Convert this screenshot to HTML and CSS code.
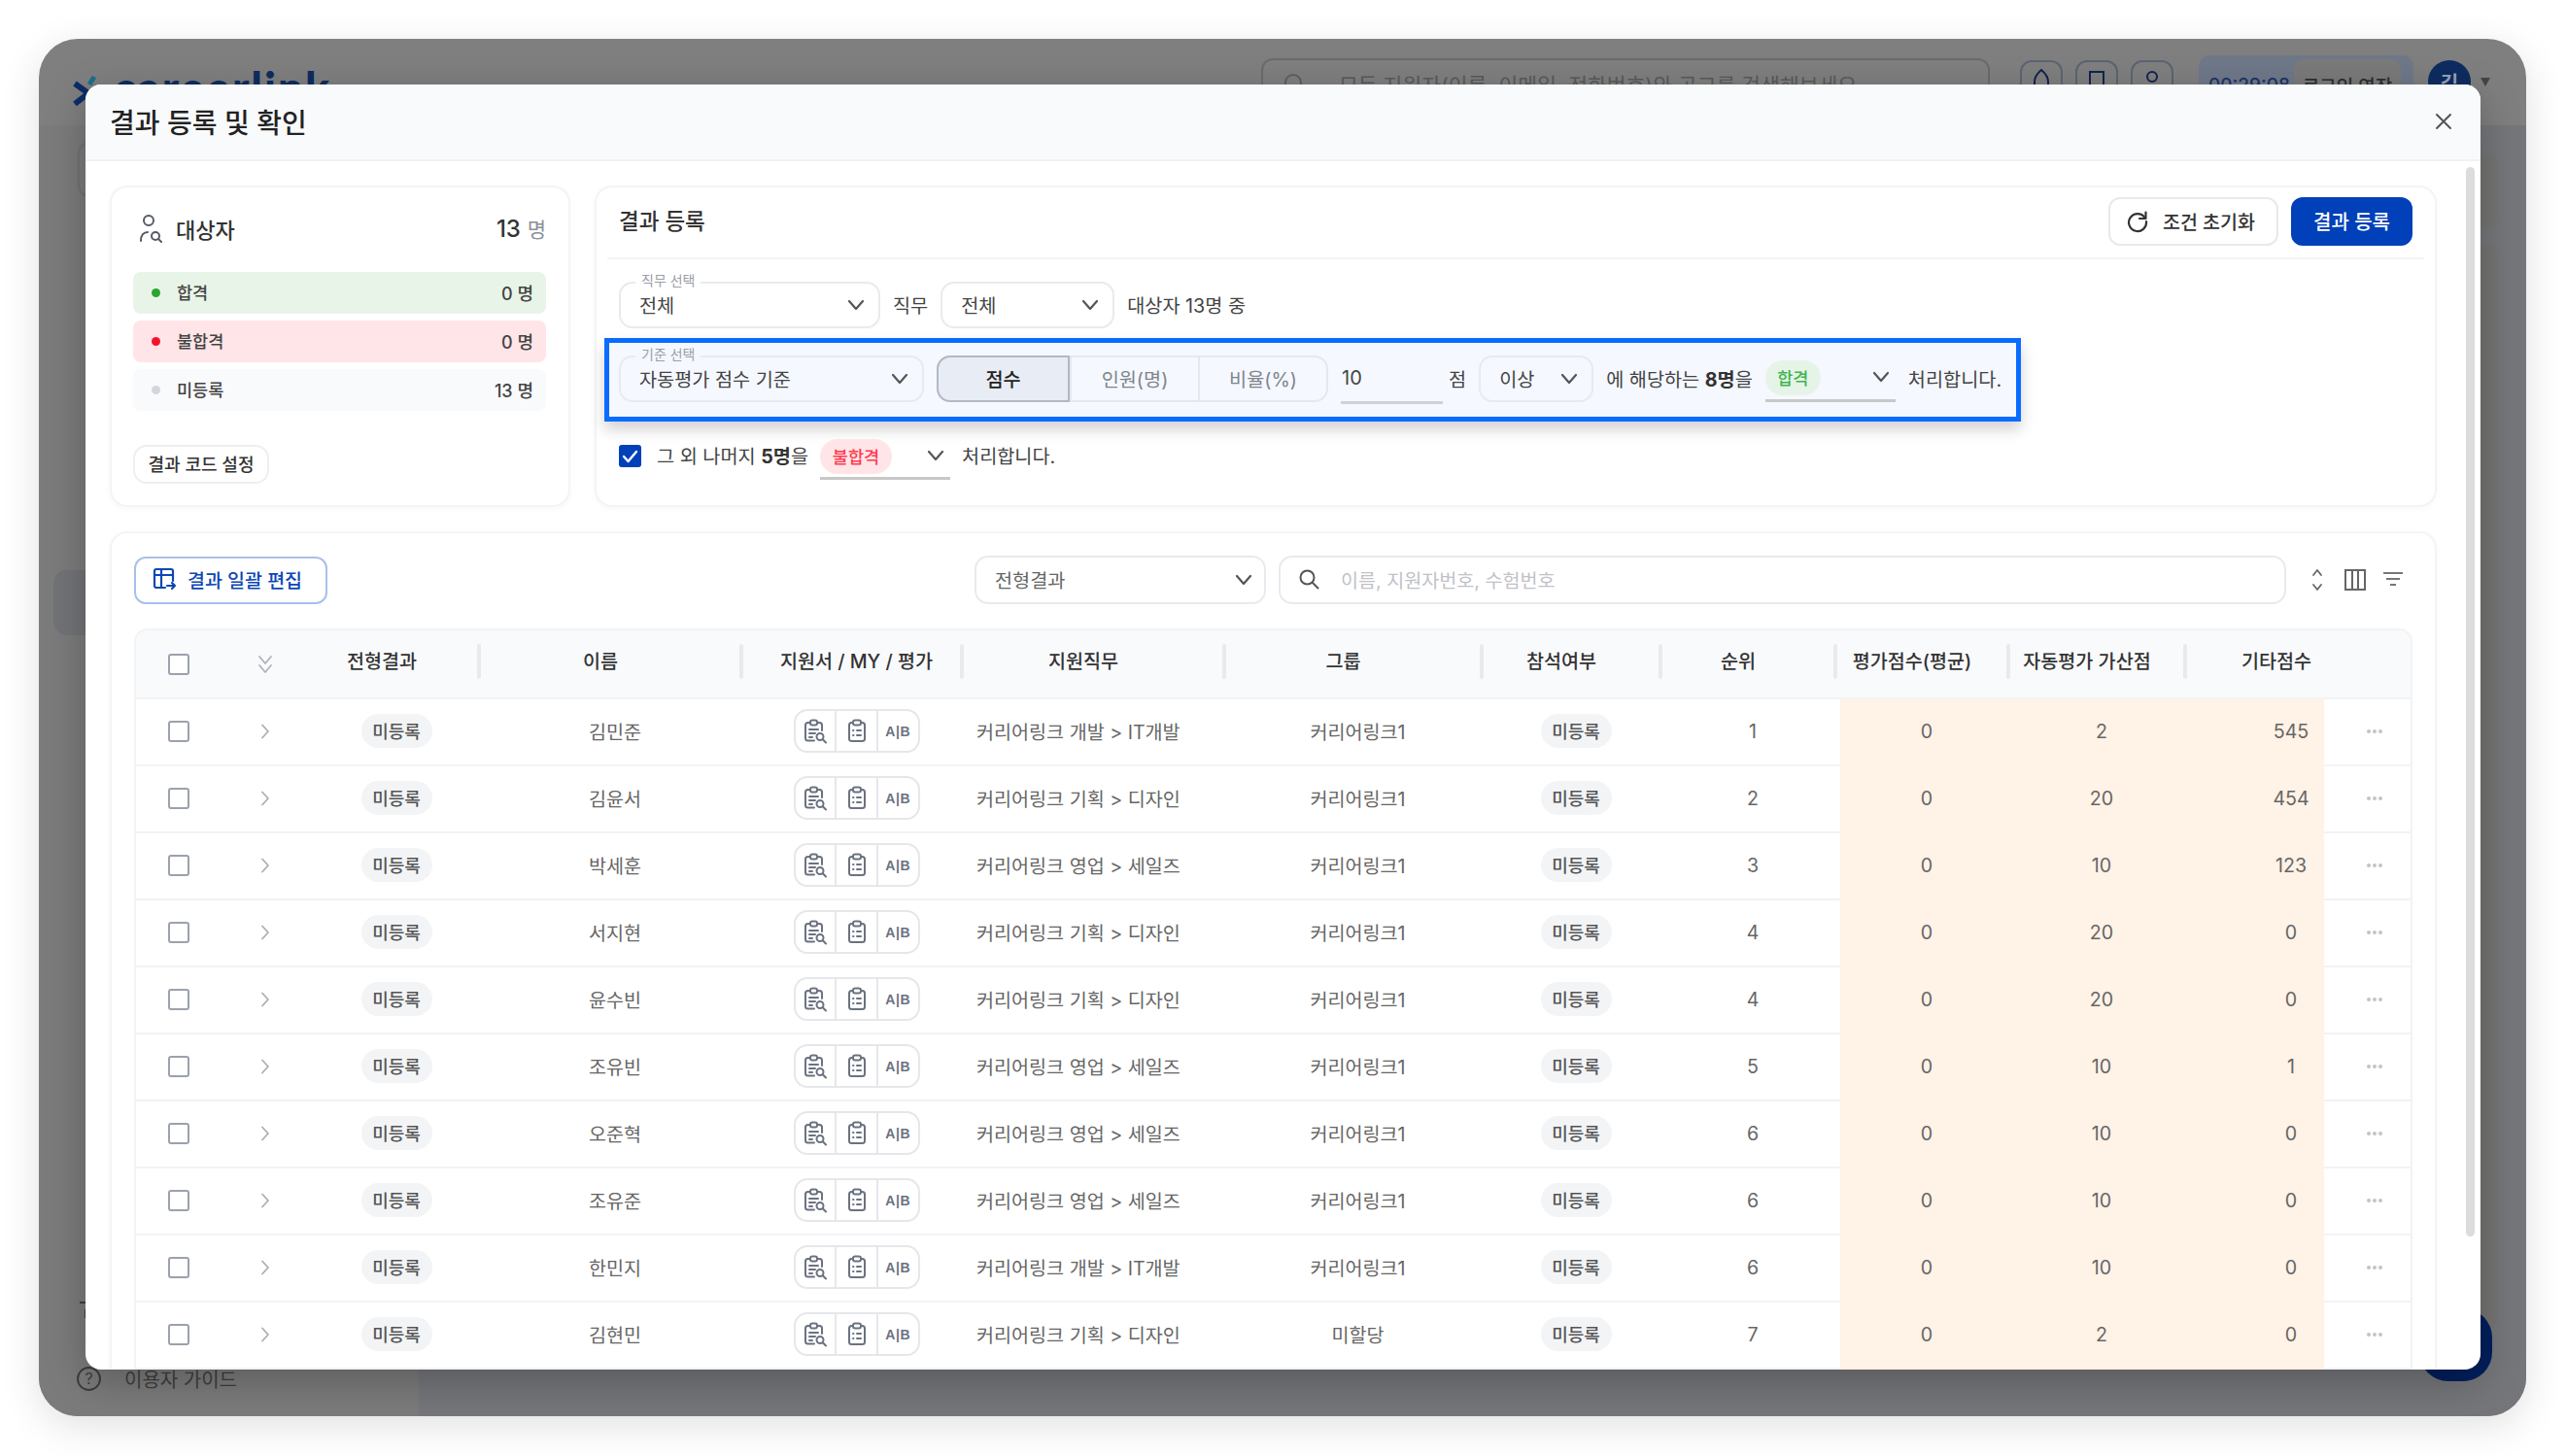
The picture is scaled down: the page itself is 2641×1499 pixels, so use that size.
FILE: index.html
```html
<!DOCTYPE html>
<html lang="ko">
<head>
<meta charset="utf-8">
<title>결과 등록 및 확인</title>
<link rel="stylesheet" href="styles.css">
</head>
<body>
<svg class="defs" width="0" height="0" aria-hidden="true">
  <symbol id="chev" viewBox="0 0 18 12"><path d="M2 2l7 8 7-8" fill="none" stroke="currentColor" stroke-width="2.2" stroke-linecap="round" stroke-linejoin="round"/></symbol>
  <symbol id="right" viewBox="0 0 10 16"><path d="M2 1.5L8 8l-6 6.5" fill="none" stroke="currentColor" stroke-width="1.8" stroke-linecap="round" stroke-linejoin="round"/></symbol>
  <symbol id="clipsearch" viewBox="0 0 24 26"><g fill="none" stroke="currentColor" stroke-width="2" stroke-linecap="round" stroke-linejoin="round"><path d="M7 4H4.5A2.5 2.5 0 0 0 2 6.500V20a2.500 2.500 0 0 0 2.500 2.500H11"/><path d="M14 4h2.500A2.500 2.500 0 0 1 19 6.500V12"/><rect x="7" y="1.500" width="7" height="5" rx="2"/><path d="M6 11h9M6 15h6M6 19h3"/><circle cx="17" cy="18.500" r="3.500"/><path d="M19.800 21.300L23 24.500"/></g></symbol>
  <symbol id="cliplist" viewBox="0 0 20 25"><g fill="none" stroke="currentColor" stroke-width="2" stroke-linecap="round" stroke-linejoin="round"><path d="M6 4H4.500A2.500 2.500 0 0 0 2 6.500v14A2.500 2.500 0 0 0 4.500 23h11a2.500 2.500 0 0 0 2.500-2.500v-14A2.500 2.500 0 0 0 15.500 4H14"/><rect x="6" y="1.500" width="8" height="5" rx="2"/><path d="M6 12h.5M6 17h.5M10 12h4M10 17h4"/></g></symbol>
</svg>

<div class="frame">
  <header class="topbar">
    <div class="brand">
      <svg class="brand-mark" viewBox="0 0 24 34" width="24" height="34" aria-hidden="true"><path d="M2 9l14 10L2 30" fill="none" stroke="#0c2d68" stroke-width="6"/><path d="M17 10l5-8" stroke="#1e6f8c" stroke-width="5"/></svg>
      <span class="brand-name">careerlink</span>
    </div>
    <div class="top-tools">
      <div class="top-search">
        <svg width="24" height="24" viewBox="0 0 24 24" aria-hidden="true"><circle cx="11" cy="11" r="8" fill="none" stroke="#5f5f5f" stroke-width="2"/></svg>
        <span>모든 지원자(이름, 이메일, 전화번호)와 공고를 검색해보세요</span>
      </div>
      <div class="top-icons">
        <span class="top-icon"><svg width="18" height="30" viewBox="0 0 18 30" aria-hidden="true"><path d="M2 28V14C2 8 9 2 9 2s7 6 7 12v14" fill="none" stroke="#11244f" stroke-width="2"/></svg></span>
        <span class="top-icon"><svg width="18" height="30" viewBox="0 0 18 30" aria-hidden="true"><path d="M2 28V4h14v24" fill="none" stroke="#11244f" stroke-width="2"/></svg></span>
        <span class="top-icon"><svg width="18" height="30" viewBox="0 0 18 30" aria-hidden="true"><circle cx="9" cy="9" r="5" fill="none" stroke="#11244f" stroke-width="2"/><path d="M2 24h14" stroke="#11244f" stroke-width="2"/></svg></span>
      </div>
      <div class="timer">
        <span class="timer-time">00:29:08</span>
        <span class="timer-btn">로그인 연장</span>
      </div>
      <span class="avatar">김</span>
      <span class="caret"></span>
    </div>
  </header>

  <div class="back">
    <aside class="sidebar">
      <div class="side-box"></div>
      <div class="side-block"></div>
      <svg class="side-icon" width="24" height="20" viewBox="0 0 24 20" aria-hidden="true"><path d="M2 2h20v8H8v8" fill="none" stroke="#3f3f3f" stroke-width="2"/></svg>
      <div class="guide">
        <span class="guide-icon">?</span>
        <span>이용자 가이드</span>
      </div>
    </aside>
    <main class="back-main">
      <div class="back-card short"></div>
      <div class="back-card tall"></div>
    </main>
  </div>

  <div class="fab"></div>

  <section class="modal">
    <div class="modal-head">
      <h1 class="modal-title">결과 등록 및 확인</h1>
      <svg class="modal-close" width="18" height="18" viewBox="0 0 18 18" aria-hidden="true"><path d="M2 2l14 14M16 2L2 16" fill="none" stroke="#555" stroke-width="2" stroke-linecap="round"/></svg>
    </div>
    <div class="scroll-thumb"></div>
    <div class="modal-body">
      <div class="top-cards">
        <div class="card summary">
          <div class="sum-head">
            <svg width="26" height="30" viewBox="0 0 26 30" aria-hidden="true"><g fill="none" stroke="#555b66" stroke-width="2" stroke-linecap="round"><circle cx="10" cy="7" r="5"/><path d="M2 28c0-6 3-9 7-9"/><circle cx="17" cy="23" r="4"/><path d="M20 26l3 3"/></g></svg>
            <span class="sum-title">대상자</span>
            <span class="sum-total"><b>13</b> <i>명</i></span>
          </div>
          <div class="sum-row pass"><span class="dot"></span><span class="sum-label">합격</span><span class="sum-num">0 명</span></div>
          <div class="sum-row fail"><span class="dot"></span><span class="sum-label">불합격</span><span class="sum-num">0 명</span></div>
          <div class="sum-row none"><span class="dot"></span><span class="sum-label">미등록</span><span class="sum-num">13 명</span></div>
          <button class="code-btn" type="button">결과 코드 설정</button>
        </div>

        <div class="card register">
          <div class="reg-head">
            <h2 class="reg-title">결과 등록</h2>
            <button class="reset-btn" type="button">
              <svg width="24" height="24" viewBox="0 0 24 24" aria-hidden="true"><path d="M19.500 8A9 9 0 1 0 21 12" fill="none" stroke="#333" stroke-width="2.200" stroke-linecap="round"/><path d="M20.500 2.500V9H14" fill="none" stroke="#333" stroke-width="2.200" stroke-linejoin="round" stroke-linecap="round"/></svg>
              조건 초기화
            </button>
            <button class="submit-btn" type="button">결과 등록</button>
          </div>

          <div class="cond-row">
            <div class="sel w269"><span class="sel-label">직무 선택</span><span>전체</span><svg class="chev"><use href="#chev"/></svg></div>
            <span class="txt">직무</span>
            <div class="sel w179"><span>전체</span><svg class="chev"><use href="#chev"/></svg></div>
            <span class="txt">대상자 13명 중</span>
          </div>

          <div class="cond-row hl">
            <div class="sel w314"><span class="sel-label">기준 선택</span><span>자동평가 점수 기준</span><svg class="chev"><use href="#chev"/></svg></div>
            <div class="seg">
              <span class="seg-item active">점수</span>
              <span class="seg-item">인원(명)</span>
              <span class="seg-item">비율(%)</span>
            </div>
            <span class="num-input">10</span>
            <span class="txt">점</span>
            <div class="sel w118"><span>이상</span><svg class="chev"><use href="#chev"/></svg></div>
            <span class="txt">에 해당하는 <b>8명</b>을</span>
            <div class="status"><span class="pill-pass">합격</span><svg class="chev"><use href="#chev"/></svg></div>
            <span class="txt">처리합니다.</span>
          </div>

          <div class="cond-row rest">
            <span class="check-on"><svg width="17" height="14" viewBox="0 0 17 14" aria-hidden="true"><path d="M2 7l4.500 5L15 2" fill="none" stroke="#fff" stroke-width="2.400" stroke-linecap="round" stroke-linejoin="round"/></svg></span>
            <span class="txt">그 외 나머지 <b>5명</b>을</span>
            <div class="status"><span class="pill-fail">불합격</span><svg class="chev"><use href="#chev"/></svg></div>
            <span class="txt">처리합니다.</span>
          </div>
        </div>
      </div>

      <div class="card list">
        <div class="toolbar">
          <button class="bulk-btn" type="button">
            <svg width="25" height="24" viewBox="0 0 25 24" aria-hidden="true"><g fill="none" stroke="#0d47b5" stroke-width="2.200" stroke-linejoin="round" stroke-linecap="round"><path d="M13 21H4a2 2 0 0 1-2-2V4a2 2 0 0 1 2-2h15a2 2 0 0 1 2 2v10"/><path d="M2 8h19M9 2v19"/><path d="M15 19h8M20 16l3 3-3 3"/></g></svg>
            결과 일괄 편집
          </button>
          <div class="sel w300 plain"><span>전형결과</span><svg class="chev"><use href="#chev"/></svg></div>
          <div class="search">
            <svg width="22" height="22" viewBox="0 0 22 22" aria-hidden="true"><g fill="none" stroke="#555" stroke-width="2" stroke-linecap="round"><circle cx="9.500" cy="9.500" r="7"/><path d="M15 15l5.500 5.500"/></g></svg>
            <span>이름, 지원자번호, 수험번호</span>
          </div>
          <svg class="tool-a" width="12" height="24" viewBox="0 0 12 24" aria-hidden="true"><path d="M2 7l4-5 4 5M2 17l4 5 4-5" fill="none" stroke="#666" stroke-width="1.800" stroke-linecap="round" stroke-linejoin="round"/></svg>
          <svg class="tool-b" width="24" height="24" viewBox="0 0 24 24" aria-hidden="true"><path d="M2 2h20v20H2zM9 2v20M15 2v20" fill="none" stroke="#666" stroke-width="2"/></svg>
          <svg class="tool-c" width="22" height="18" viewBox="0 0 22 18" aria-hidden="true"><path d="M1 2h20M4 8h14M8 14h6" fill="none" stroke="#777" stroke-width="2"/></svg>
        </div>

        <div class="table">
          <div class="tr th">
            <div class="td"><span class="box"></span></div>
            <div class="td"><svg width="16" height="22" viewBox="0 0 16 22" aria-hidden="true"><path d="M2 3l6 7 6-7M2 12l6 7 6-7" fill="none" stroke="#aeb2b9" stroke-width="1.800" stroke-linecap="round" stroke-linejoin="round"/></svg></div>
            <div class="td split">전형결과</div>
            <div class="td split">이름</div>
            <div class="td split nopad">지원서 / MY / 평가</div>
            <div class="td split">지원직무</div>
            <div class="td split">그룹</div>
            <div class="td split">참석여부</div>
            <div class="td split">순위</div>
            <div class="td split">평가점수(평균)</div>
            <div class="td split">자동평가 가산점</div>
            <div class="td last">기타점수</div>
            <div class="td"></div>
          </div>

          <div class="tr"><div class="td"><span class="box"></span></div><div class="td"><svg class="arrow"><use href="#right"/></svg></div><div class="td"><span class="pill">미등록</span></div><div class="td">김민준</div><div class="td"><div class="docs"><span><svg class="ic1"><use href="#clipsearch"/></svg></span><span><svg class="ic2"><use href="#cliplist"/></svg></span><span class="ab">A|B</span></div></div><div class="td job">커리어링크 개발 &gt; IT개발</div><div class="td">커리어링크1</div><div class="td"><span class="pill">미등록</span></div><div class="td">1</div><div class="td hot">0</div><div class="td hot">2</div><div class="td hot last">545</div><div class="td more"><i></i><i></i><i></i></div></div>

          <div class="tr"><div class="td"><span class="box"></span></div><div class="td"><svg class="arrow"><use href="#right"/></svg></div><div class="td"><span class="pill">미등록</span></div><div class="td">김윤서</div><div class="td"><div class="docs"><span><svg class="ic1"><use href="#clipsearch"/></svg></span><span><svg class="ic2"><use href="#cliplist"/></svg></span><span class="ab">A|B</span></div></div><div class="td job">커리어링크 기획 &gt; 디자인</div><div class="td">커리어링크1</div><div class="td"><span class="pill">미등록</span></div><div class="td">2</div><div class="td hot">0</div><div class="td hot">20</div><div class="td hot last">454</div><div class="td more"><i></i><i></i><i></i></div></div>

          <div class="tr"><div class="td"><span class="box"></span></div><div class="td"><svg class="arrow"><use href="#right"/></svg></div><div class="td"><span class="pill">미등록</span></div><div class="td">박세훈</div><div class="td"><div class="docs"><span><svg class="ic1"><use href="#clipsearch"/></svg></span><span><svg class="ic2"><use href="#cliplist"/></svg></span><span class="ab">A|B</span></div></div><div class="td job">커리어링크 영업 &gt; 세일즈</div><div class="td">커리어링크1</div><div class="td"><span class="pill">미등록</span></div><div class="td">3</div><div class="td hot">0</div><div class="td hot">10</div><div class="td hot last">123</div><div class="td more"><i></i><i></i><i></i></div></div>

          <div class="tr"><div class="td"><span class="box"></span></div><div class="td"><svg class="arrow"><use href="#right"/></svg></div><div class="td"><span class="pill">미등록</span></div><div class="td">서지현</div><div class="td"><div class="docs"><span><svg class="ic1"><use href="#clipsearch"/></svg></span><span><svg class="ic2"><use href="#cliplist"/></svg></span><span class="ab">A|B</span></div></div><div class="td job">커리어링크 기획 &gt; 디자인</div><div class="td">커리어링크1</div><div class="td"><span class="pill">미등록</span></div><div class="td">4</div><div class="td hot">0</div><div class="td hot">20</div><div class="td hot last">0</div><div class="td more"><i></i><i></i><i></i></div></div>

          <div class="tr"><div class="td"><span class="box"></span></div><div class="td"><svg class="arrow"><use href="#right"/></svg></div><div class="td"><span class="pill">미등록</span></div><div class="td">윤수빈</div><div class="td"><div class="docs"><span><svg class="ic1"><use href="#clipsearch"/></svg></span><span><svg class="ic2"><use href="#cliplist"/></svg></span><span class="ab">A|B</span></div></div><div class="td job">커리어링크 기획 &gt; 디자인</div><div class="td">커리어링크1</div><div class="td"><span class="pill">미등록</span></div><div class="td">4</div><div class="td hot">0</div><div class="td hot">20</div><div class="td hot last">0</div><div class="td more"><i></i><i></i><i></i></div></div>

          <div class="tr"><div class="td"><span class="box"></span></div><div class="td"><svg class="arrow"><use href="#right"/></svg></div><div class="td"><span class="pill">미등록</span></div><div class="td">조유빈</div><div class="td"><div class="docs"><span><svg class="ic1"><use href="#clipsearch"/></svg></span><span><svg class="ic2"><use href="#cliplist"/></svg></span><span class="ab">A|B</span></div></div><div class="td job">커리어링크 영업 &gt; 세일즈</div><div class="td">커리어링크1</div><div class="td"><span class="pill">미등록</span></div><div class="td">5</div><div class="td hot">0</div><div class="td hot">10</div><div class="td hot last">1</div><div class="td more"><i></i><i></i><i></i></div></div>

          <div class="tr"><div class="td"><span class="box"></span></div><div class="td"><svg class="arrow"><use href="#right"/></svg></div><div class="td"><span class="pill">미등록</span></div><div class="td">오준혁</div><div class="td"><div class="docs"><span><svg class="ic1"><use href="#clipsearch"/></svg></span><span><svg class="ic2"><use href="#cliplist"/></svg></span><span class="ab">A|B</span></div></div><div class="td job">커리어링크 영업 &gt; 세일즈</div><div class="td">커리어링크1</div><div class="td"><span class="pill">미등록</span></div><div class="td">6</div><div class="td hot">0</div><div class="td hot">10</div><div class="td hot last">0</div><div class="td more"><i></i><i></i><i></i></div></div>

          <div class="tr"><div class="td"><span class="box"></span></div><div class="td"><svg class="arrow"><use href="#right"/></svg></div><div class="td"><span class="pill">미등록</span></div><div class="td">조유준</div><div class="td"><div class="docs"><span><svg class="ic1"><use href="#clipsearch"/></svg></span><span><svg class="ic2"><use href="#cliplist"/></svg></span><span class="ab">A|B</span></div></div><div class="td job">커리어링크 영업 &gt; 세일즈</div><div class="td">커리어링크1</div><div class="td"><span class="pill">미등록</span></div><div class="td">6</div><div class="td hot">0</div><div class="td hot">10</div><div class="td hot last">0</div><div class="td more"><i></i><i></i><i></i></div></div>

          <div class="tr"><div class="td"><span class="box"></span></div><div class="td"><svg class="arrow"><use href="#right"/></svg></div><div class="td"><span class="pill">미등록</span></div><div class="td">한민지</div><div class="td"><div class="docs"><span><svg class="ic1"><use href="#clipsearch"/></svg></span><span><svg class="ic2"><use href="#cliplist"/></svg></span><span class="ab">A|B</span></div></div><div class="td job">커리어링크 개발 &gt; IT개발</div><div class="td">커리어링크1</div><div class="td"><span class="pill">미등록</span></div><div class="td">6</div><div class="td hot">0</div><div class="td hot">10</div><div class="td hot last">0</div><div class="td more"><i></i><i></i><i></i></div></div>

          <div class="tr"><div class="td"><span class="box"></span></div><div class="td"><svg class="arrow"><use href="#right"/></svg></div><div class="td"><span class="pill">미등록</span></div><div class="td">김현민</div><div class="td"><div class="docs"><span><svg class="ic1"><use href="#clipsearch"/></svg></span><span><svg class="ic2"><use href="#cliplist"/></svg></span><span class="ab">A|B</span></div></div><div class="td job">커리어링크 기획 &gt; 디자인</div><div class="td">미할당</div><div class="td"><span class="pill">미등록</span></div><div class="td">7</div><div class="td hot">0</div><div class="td hot">2</div><div class="td hot last">0</div><div class="td more"><i></i><i></i><i></i></div></div>
        </div>
      </div>
    </div>
  </section>
</div>
</body>
</html>
```

FILE: styles.css
```css
* { box-sizing: border-box; }
html, body { margin: 0; padding: 0; background: #fff; }
body {
  width: 2641px;
  height: 1499px;
  overflow: hidden;
  font-family: Inter, "Noto Sans CJK KR", "Noto Sans", sans-serif;
  color: #333;
}
.defs { position: absolute; }
b { font-weight: 700; }
i { font-style: normal; }

/* backdrop window */
.frame {
  position: relative;
  margin: 40px 0 0 40px;
  width: 2560px;
  height: 1418px;
  border-radius: 40px;
  overflow: hidden;
  background: #7f7f7f;
  display: flex;
  flex-direction: column;
  box-shadow: 0 10px 40px rgba(0, 0, 0, .12);
}
.topbar {
  height: 89px;
  flex: none;
  display: flex;
  justify-content: space-between;
  padding: 0 37px 0 35px;
  overflow: hidden;
}
.brand { display: flex; align-items: flex-start; gap: 18px; padding-top: 35px; height: 70px; }
.brand-mark { margin-top: 2px; }
.brand-name {
  display: block;
  height: 20px;
  overflow: hidden;
  margin-top: -8px;
  font-family: Lato, sans-serif;
  font-weight: 900;
  font-size: 46px;
  line-height: 46px;
  letter-spacing: 2px;
  color: #0e2c60;
}
.top-tools { display: flex; align-items: flex-start; }
.top-search {
  width: 750px;
  height: 52px;
  margin-top: 20px;
  border: 2px solid #6b6b6b;
  border-radius: 12px;
  display: flex;
  align-items: center;
  gap: 34px;
  padding-left: 20px;
  font-size: 21.5px;
  color: #5a5a5a;
}
.top-icons { display: flex; gap: 13px; margin: 22px 0 0 31px; }
.top-icon {
  width: 44px;
  height: 52px;
  border: 2px solid #5c6373;
  border-radius: 12px;
  display: flex;
  justify-content: center;
  padding-top: 6px;
}
.timer {
  width: 221px;
  height: 54px;
  margin: 17px 0 0 26px;
  border-radius: 12px;
  background: #6f7889;
  display: flex;
  align-items: center;
  justify-content: space-between;
  padding: 0 13px 0 10px;
}
.timer-time { font-size: 19px; font-weight: 500; color: #1a3468; padding-top: 6px; }
.timer-btn {
  width: 110px;
  height: 46px;
  border-radius: 10px;
  background: #7a7a7a;
  font-size: 19px;
  font-weight: 500;
  color: #2e2e2e;
  display: flex;
  align-items: center;
  justify-content: center;
  padding-top: 6px;
}
.avatar {
  width: 44px;
  height: 44px;
  margin: 22px 0 0 15px;
  border-radius: 50%;
  background: #0e2c60;
  color: #9aa3b6;
  font-size: 20px;
  font-weight: 700;
  display: flex;
  align-items: center;
  justify-content: center;
}
.caret {
  width: 0;
  height: 0;
  margin: 40px 0 0 10px;
  border-left: 5px solid transparent;
  border-right: 5px solid transparent;
  border-top: 9px solid #444;
}

.back { flex: 1; display: flex; min-height: 0; }
.sidebar {
  width: 391px;
  flex: none;
  background: #7b7b7b;
  display: flex;
  flex-direction: column;
  padding-top: 17px;
}
.side-box {
  width: 200px;
  height: 57px;
  margin-left: 40px;
  border: 2px solid #727272;
  border-radius: 12px;
}
.side-block {
  width: 300px;
  height: 67px;
  margin: 384px 0 0 15px;
  border-radius: 14px;
  background: #727376;
}
.side-icon { margin: auto 0 0 40px; }
.guide {
  display: flex;
  align-items: center;
  gap: 24px;
  height: 28px;
  margin: 46px 0 25px 39px;
  font-size: 20px;
  color: #3e3e3e;
}
.guide-icon {
  width: 25px;
  height: 25px;
  border: 2px solid #3e3e3e;
  border-radius: 50%;
  font-size: 16px;
  display: flex;
  align-items: center;
  justify-content: center;
}
.back-main { flex: 1; background: #75767a; padding: 29px 28px 90px 0; display: flex; flex-direction: column; align-items: flex-end; gap: 18px; }
.back-card { width: 150px; background: #747473; border-radius: 12px; }
.back-card.short { height: 76px; }
.back-card.tall { flex: 1; }
.fab {
  position: absolute;
  left: 2450px;
  top: 1307px;
  width: 75px;
  height: 75px;
  border-radius: 30px;
  background: #001f5c;
}

/* modal */
.modal {
  position: absolute;
  left: 48px;
  top: 47px;
  width: 2465px;
  height: 1323px;
  background: #fff;
  border-radius: 16px;
  overflow: hidden;
  display: flex;
  flex-direction: column;
  box-shadow: 0 12px 40px rgba(0, 0, 0, .25);
}
.modal-head {
  height: 79px;
  flex: none;
  background: #f9fafc;
  border-bottom: 2px solid #f0f1f3;
  display: flex;
  align-items: center;
  justify-content: space-between;
  padding: 0 29px 2px 25px;
}
.modal-title { margin: 0; font-size: 28px; font-weight: 500; color: #222; }
.scroll-thumb {
  position: absolute;
  left: 2450px;
  top: 85px;
  width: 9px;
  height: 1101px;
  border-radius: 5px;
  background: #dcdcdc;
}
.modal-body { flex: 1; min-height: 0; padding: 25px 45px 0 25px; }
.top-cards { display: grid; grid-template-columns: 474px 1fr; gap: 25px; }
.card {
  background: #fff;
  border: 2px solid #f3f4f6;
  border-radius: 18px;
  box-shadow: 0 2px 6px rgba(0, 0, 0, .03);
}
.summary { height: 331px; padding: 22px 23px 0 22px; }
.sum-head { display: flex; align-items: center; height: 42px; margin-bottom: 23px; padding: 0 0 3px 6px; }
.sum-title { font-size: 22px; font-weight: 500; color: #333; margin-left: 12px; }
.sum-total { margin-left: auto; font-size: 24px; color: #333; }
.sum-total b { font-weight: 500; }
.sum-total i { font-size: 21px; color: #8b8f97; }
.sum-row {
  height: 43px;
  border-radius: 8px;
  margin-bottom: 7px;
  display: flex;
  align-items: center;
  padding: 0 13px 2px 19px;
  font-size: 17.5px;
  color: #444;
}
.sum-row.pass { background: #e9f4e9; }
.sum-row.fail { background: #ffe5e8; }
.sum-row.none { background: #f9fafc; }
.dot { width: 9px; height: 9px; border-radius: 50%; margin-right: 17px; margin-top: 2px; }
.pass .dot { background: #2aa52f; }
.fail .dot { background: #f5132c; }
.none .dot { background: #d3d6dc; }
.sum-label { font-weight: 500; }
.sum-num { margin-left: auto; font-size: 18px; font-weight: 500; }
.code-btn {
  display: block;
  width: 140px;
  height: 40px;
  margin-top: 35px;
  padding: 0 0 2px;
  background: #fff;
  border: 2px solid #eeeff2;
  border-radius: 14px;
  font: 500 18px Inter, "Noto Sans CJK KR", sans-serif;
  color: #333;
}

.register { height: 331px; padding: 10px 11px 0; }
.reg-head {
  display: flex;
  align-items: center;
  height: 64px;
  padding: 0 12px 13px;
  border-bottom: 2px solid #f2f3f5;
}
.reg-title { margin: 0 auto 3px 0; font-size: 22.5px; font-weight: 500; color: #333; }
.reset-btn, .submit-btn {
  height: 50px;
  padding: 0;
  border-radius: 12px;
  font: 500 19.5px Inter, "Noto Sans CJK KR", sans-serif;
  display: flex;
  align-items: center;
}
.reset-btn {
  width: 175px;
  margin-right: 13px;
  gap: 14px;
  padding-left: 16px;
  background: #fff;
  color: #333;
  border: 2px solid #e8e9ed;
}
.submit-btn { width: 125px; background: #0040b8; color: #fff; border: 0; justify-content: center; font-size: 20px; }

.cond-row { display: flex; align-items: center; gap: 13px; padding-left: 12px; margin-top: 23px; height: 48px; font-size: 20px; color: #444; }
.txt { white-space: nowrap; font-size: 19.7px; color: #444; padding-bottom: 2px; }
.txt b { color: #333; }
.sel {
  position: relative;
  height: 48px;
  flex: none;
  background: #fff;
  border: 2px solid #e9eaee;
  border-radius: 14px;
  display: flex;
  align-items: center;
  justify-content: space-between;
  padding: 0 14px 2px 19px;
  font-size: 19.7px;
  color: #444;
}
.sel-label {
  position: absolute;
  left: 15px;
  top: -12px;
  padding: 0 6px;
  background: #fff;
  font-size: 14px;
  line-height: 18px;
  color: #9a9ea6;
}
.chev { width: 18px; height: 12px; color: #555; flex: none; margin-top: 2px; }
.w269 { width: 269px; }
.w179 { width: 179px; }
.w314 { width: 314px; }
.w118 { width: 118px; }
.w300 { width: 300px; }
.hl {
  height: 86px;
  width: 1458px;
  margin: 10px 0 0 -3px;
  padding: 0 0 2px 10px;
  background: #f5f8ff;
  border: 5px solid #0a6cff;
  box-shadow: 0 8px 14px rgba(0, 0, 0, .18);
}
.hl .sel { background: #f5f8ff; }
.hl .sel-label { background: #f5f8ff; }
.seg {
  width: 403px;
  height: 48px;
  flex: none;
  display: flex;
  border: 2px solid #e6e8ee;
  border-radius: 14px;
  font-size: 19.7px;
  color: #80848c;
}
.seg-item {
  flex: 1;
  display: flex;
  align-items: center;
  justify-content: center;
  padding-bottom: 2px;
  border-left: 2px solid #e6e8ee;
}
.seg-item:first-child { border-left: 0; }
.seg-item.active {
  margin: -2px 0 -2px -2px;
  flex: 0 0 137px;
  background: #e8ecf4;
  border: 2px solid #b3b8c4;
  border-radius: 14px 0 0 14px;
  font-weight: 500;
  color: #222;
}
.num-input {
  width: 105px;
  height: 52px;
  flex: none;
  margin: 0 -7px 0 0;
  padding-left: 1px;
  border-bottom: 3px solid #cfd1d6;
  display: flex;
  align-items: center;
  font-size: 20px;
  color: #444;
}
.status {
  width: 134px;
  height: 48px;
  flex: none;
  display: flex;
  align-items: flex-start;
  justify-content: space-between;
  padding: 5px 6px 0 0;
  border-bottom: 3px solid #c8c8c8;
}
.status .chev { margin-top: 11px; }
.pill-pass, .pill-fail {
  height: 36px;
  display: flex;
  align-items: center;
  justify-content: center;
  border-radius: 18px;
  font-size: 17.5px;
  font-weight: 500;
  padding-bottom: 2px;
}
.pill-pass { width: 57px; background: #e6f4e8; color: #3fb54f; }
.pill-fail { width: 74px; background: #ffe5e8; color: #ff3b4e; }
.rest { margin-top: 18px; height: 42px; align-items: flex-start; gap: 12px; }
.rest .txt { line-height: 36px; }
.rest .check-on { margin: 6px 4px 0 0; }
.rest .status { height: 42px; padding-top: 0; }
.check-on {
  width: 23px;
  height: 23px;
  border-radius: 3px;
  background: #0040b8;
  display: flex;
  align-items: center;
  justify-content: center;
}

.list { margin-top: 25px; padding: 23px 23px 0; height: 900px; }
.toolbar { display: flex; align-items: center; height: 50px; padding-right: 9px; }
.bulk-btn {
  width: 199px;
  height: 49px;
  margin-right: auto;
  padding: 0 0 2px 17px;
  background: #fff;
  border: 2px solid #a8c0ea;
  border-radius: 12px;
  font: 500 19.5px Inter, "Noto Sans CJK KR", sans-serif;
  color: #0d47b5;
  display: flex;
  align-items: center;
  gap: 11px;
}
.plain { height: 50px; color: #666; padding-right: 12px; }
.search {
  width: 1037px;
  height: 50px;
  margin-left: 13px;
  border: 2px solid #e9eaee;
  border-radius: 14px;
  display: flex;
  align-items: center;
  gap: 22px;
  padding: 0 0 2px 18px;
  font-size: 19.6px;
  color: #c0c2c7;
}
.tool-a { margin-left: 26px; }
.tool-b { margin-left: 21px; }
.tool-c { margin-left: 16px; }

.table {
  margin-top: 25px;
  border: 2px solid #f2f3f5;
  border-bottom: 0;
  border-radius: 14px 14px 0 0;
  overflow: hidden;
}
.tr {
  display: grid;
  grid-template-columns: 88px 90px 180px 270px 227px 270px 265px 184px 180px 178px 182px 138px 89px;
  height: 69px;
  border-bottom: 2px solid #f2f3f5;
  font-size: 19.6px;
  color: #666;
}
.td { display: flex; align-items: center; justify-content: center; min-width: 0; white-space: nowrap; padding-bottom: 2px; }
.th { height: 71px; background: #f9fafc; font-weight: 500; color: #333; }
.th .td { position: relative; padding-right: 30px; padding-bottom: 8px; }
.th .td:nth-child(-n+2) { padding: 0; }
.th .nopad { padding-right: 0; }
.th .split::after {
  content: "";
  position: absolute;
  right: 3px;
  top: 14px;
  width: 4px;
  height: 36px;
  border-radius: 2px;
  background: #e9eaed;
}
.td.job { justify-content: flex-start; padding-left: 10px; }
.td.hot { background: #fff2e6; margin-bottom: -2px; padding-bottom: 4px; }
.td.last { padding-left: 70px; }
.box { width: 22px; height: 22px; border: 2px solid #9ba1ad; border-radius: 3px; background: #fff; }
.arrow { width: 10px; height: 16px; color: #aaaeb5; }
.pill {
  width: 73px;
  height: 35px;
  border-radius: 18px;
  background: #f3f4f6;
  color: #555;
  font-size: 18px;
  font-weight: 500;
  display: flex;
  align-items: center;
  justify-content: center;
  padding-bottom: 2px;
}
.docs {
  width: 130px;
  height: 45px;
  border: 2px solid #e6e7eb;
  border-radius: 14px;
  display: flex;
  color: #6b7280;
}
.docs > span {
  flex: 1;
  display: flex;
  align-items: center;
  justify-content: center;
  border-left: 2px solid #e6e7eb;
}
.docs > span:first-child { border-left: 0; }
.ic1 { width: 24px; height: 26px; }
.ic2 { width: 20px; height: 25px; }
.ab { font-family: "Liberation Sans", sans-serif; font-size: 14px; font-weight: 700; letter-spacing: .5px; color: #6b7280; }
.more { gap: 2px; padding-left: 14px; }
.more i { width: 4px; height: 4px; border-radius: 50%; background: #c4c4c4; }
```
